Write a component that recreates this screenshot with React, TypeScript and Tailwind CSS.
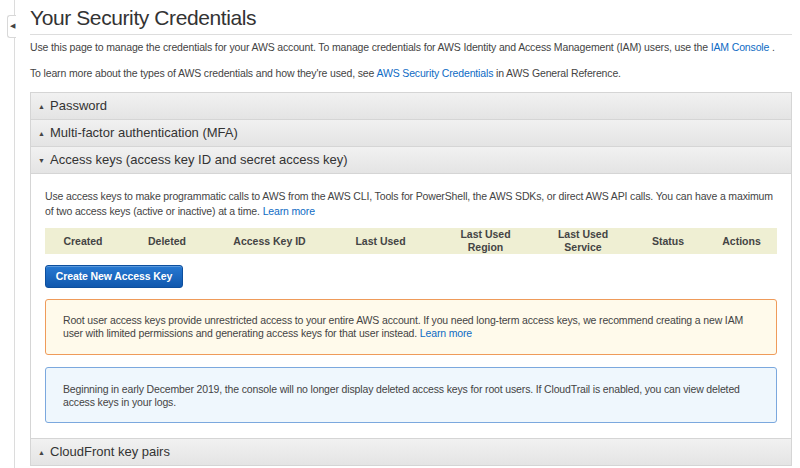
import React from 'react';

const font = { fontFamily: '"Liberation Sans", Arial, Helvetica, sans-serif' };

function SectionHeader({ title, open = false }: { title: string; open?: boolean }) {
  return (
    <div className="flex h-[27px] items-center border-b border-[#d5d5d5] bg-gradient-to-b from-[#f1f1f1] to-[#e4e4e4] pl-[7px] text-[13px] text-[#333]">
      <span className="mr-[6px] w-[6px] text-[7px] leading-none text-[#444]">{open ? '▼' : '▲'}</span>
      <span>{title}</span>
    </div>
  );
}

const columns: { label: React.ReactNode; w: string }[] = [
  { label: 'Created', w: 'w-[76px]' },
  { label: 'Deleted', w: 'w-[92px]' },
  { label: 'Access Key ID', w: 'w-[113px]' },
  { label: 'Last Used', w: 'w-[109px]' },
  { label: <>Last Used<br />Region</>, w: 'w-[101px]' },
  { label: <>Last Used<br />Service</>, w: 'w-[94px]' },
  { label: 'Status', w: 'w-[76px]' },
  { label: 'Actions', w: 'w-[71px]' },
];

export default function App() {
  return (
    <div className="flex h-[468px] w-[800px] overflow-hidden bg-white text-[#333]" style={font}>
      {/* side rail with collapse tab */}
      <div className="relative w-[15px] shrink-0 border-r border-[#dcdcdc]">
        <div className="absolute left-[7px] top-[15px] flex h-[23px] w-[9px] items-center justify-end rounded-l-[3px] border border-r-0 border-[#d8d8d8] bg-white pr-[1px] text-[7px] text-[#444]">
          ◀
        </div>
      </div>

      <div className="flex-1 pl-[15px] pr-[8px]">
        <h1 className="border-b border-[#dddddd] pb-[5px] pt-[6px] text-[21px] leading-[23px] tracking-[-0.4px] text-[#333]">
          Your Security Credentials
        </h1>
        <p className="mt-[5px] text-[10.5px] leading-[14px] tracking-[-0.15px] text-[#444]">
          Use this page to manage the credentials for your AWS account. To manage credentials for AWS Identity and Access Management (IAM) users, use the{' '}
          <span className="text-[#0e6bc4]">IAM Console</span> .
        </p>
        <p className="mt-[12px] text-[10.5px] leading-[14px] tracking-[-0.15px] text-[#444]">
          To learn more about the types of AWS credentials and how they're used, see{' '}
          <span className="text-[#0e6bc4]">AWS Security Credentials</span> in AWS General Reference.
        </p>

        <div className="mt-[12px] border-x border-t border-[#d5d5d5]">
          <SectionHeader title="Password" />
          <SectionHeader title="Multi-factor authentication (MFA)" />
          <SectionHeader title="Access keys (access key ID and secret access key)" open />

          <div className="border-b border-[#d5d5d5] px-[14px] pb-[15px] pt-[15px]">
            <p className="text-[10.5px] leading-[15px] tracking-[-0.15px] text-[#444]">
              Use access keys to make programmatic calls to AWS from the AWS CLI, Tools for PowerShell, the AWS SDKs, or direct AWS API calls. You can have a maximum of two access keys (active or inactive) at a time.{' '}
              <span className="text-[#0e6bc4]">Learn more</span>
            </p>

            <div className="mt-[9px] flex h-[26px] items-center bg-[#efefd3] text-[10.5px] font-bold leading-[13px] text-[#444]">
              {columns.map((c, i) => (
                <div key={i} className={`${c.w} text-center`}>
                  {c.label}
                </div>
              ))}
            </div>

            <button className="mt-[11px] h-[23px] w-[138px] rounded-[3px] border border-[#0d4f9e] bg-gradient-to-b from-[#2779d2] to-[#1058ae] text-[10.5px] font-bold tracking-[-0.1px] text-white shadow-[inset_0_1px_0_rgba(255,255,255,0.25)]">
              Create New Access Key
            </button>

            <div className="mt-[11px] rounded-[3px] border border-[#ef9b5a] bg-[#fffaeb] px-[17px] pb-[14px] pt-[14px] text-[10.5px] leading-[13px] tracking-[-0.15px] text-[#444]">
              Root user access keys provide unrestricted access to your entire AWS account. If you need long-term access keys, we recommend creating a new IAM user with limited permissions and generating access keys for that user instead.{' '}
              <span className="text-[#0e6bc4]">Learn more</span>
            </div>

            <div className="mt-[12px] rounded-[3px] border border-[#7ba8de] bg-[#eff7fd] px-[17px] pb-[13px] pt-[15px] text-[10.5px] leading-[13px] tracking-[-0.15px] text-[#444]">
              Beginning in early December 2019, the console will no longer display deleted access keys for root users. If CloudTrail is enabled, you can view deleted access keys in your logs.
            </div>
          </div>

          <SectionHeader title="CloudFront key pairs" />
        </div>
      </div>
    </div>
  );
}
